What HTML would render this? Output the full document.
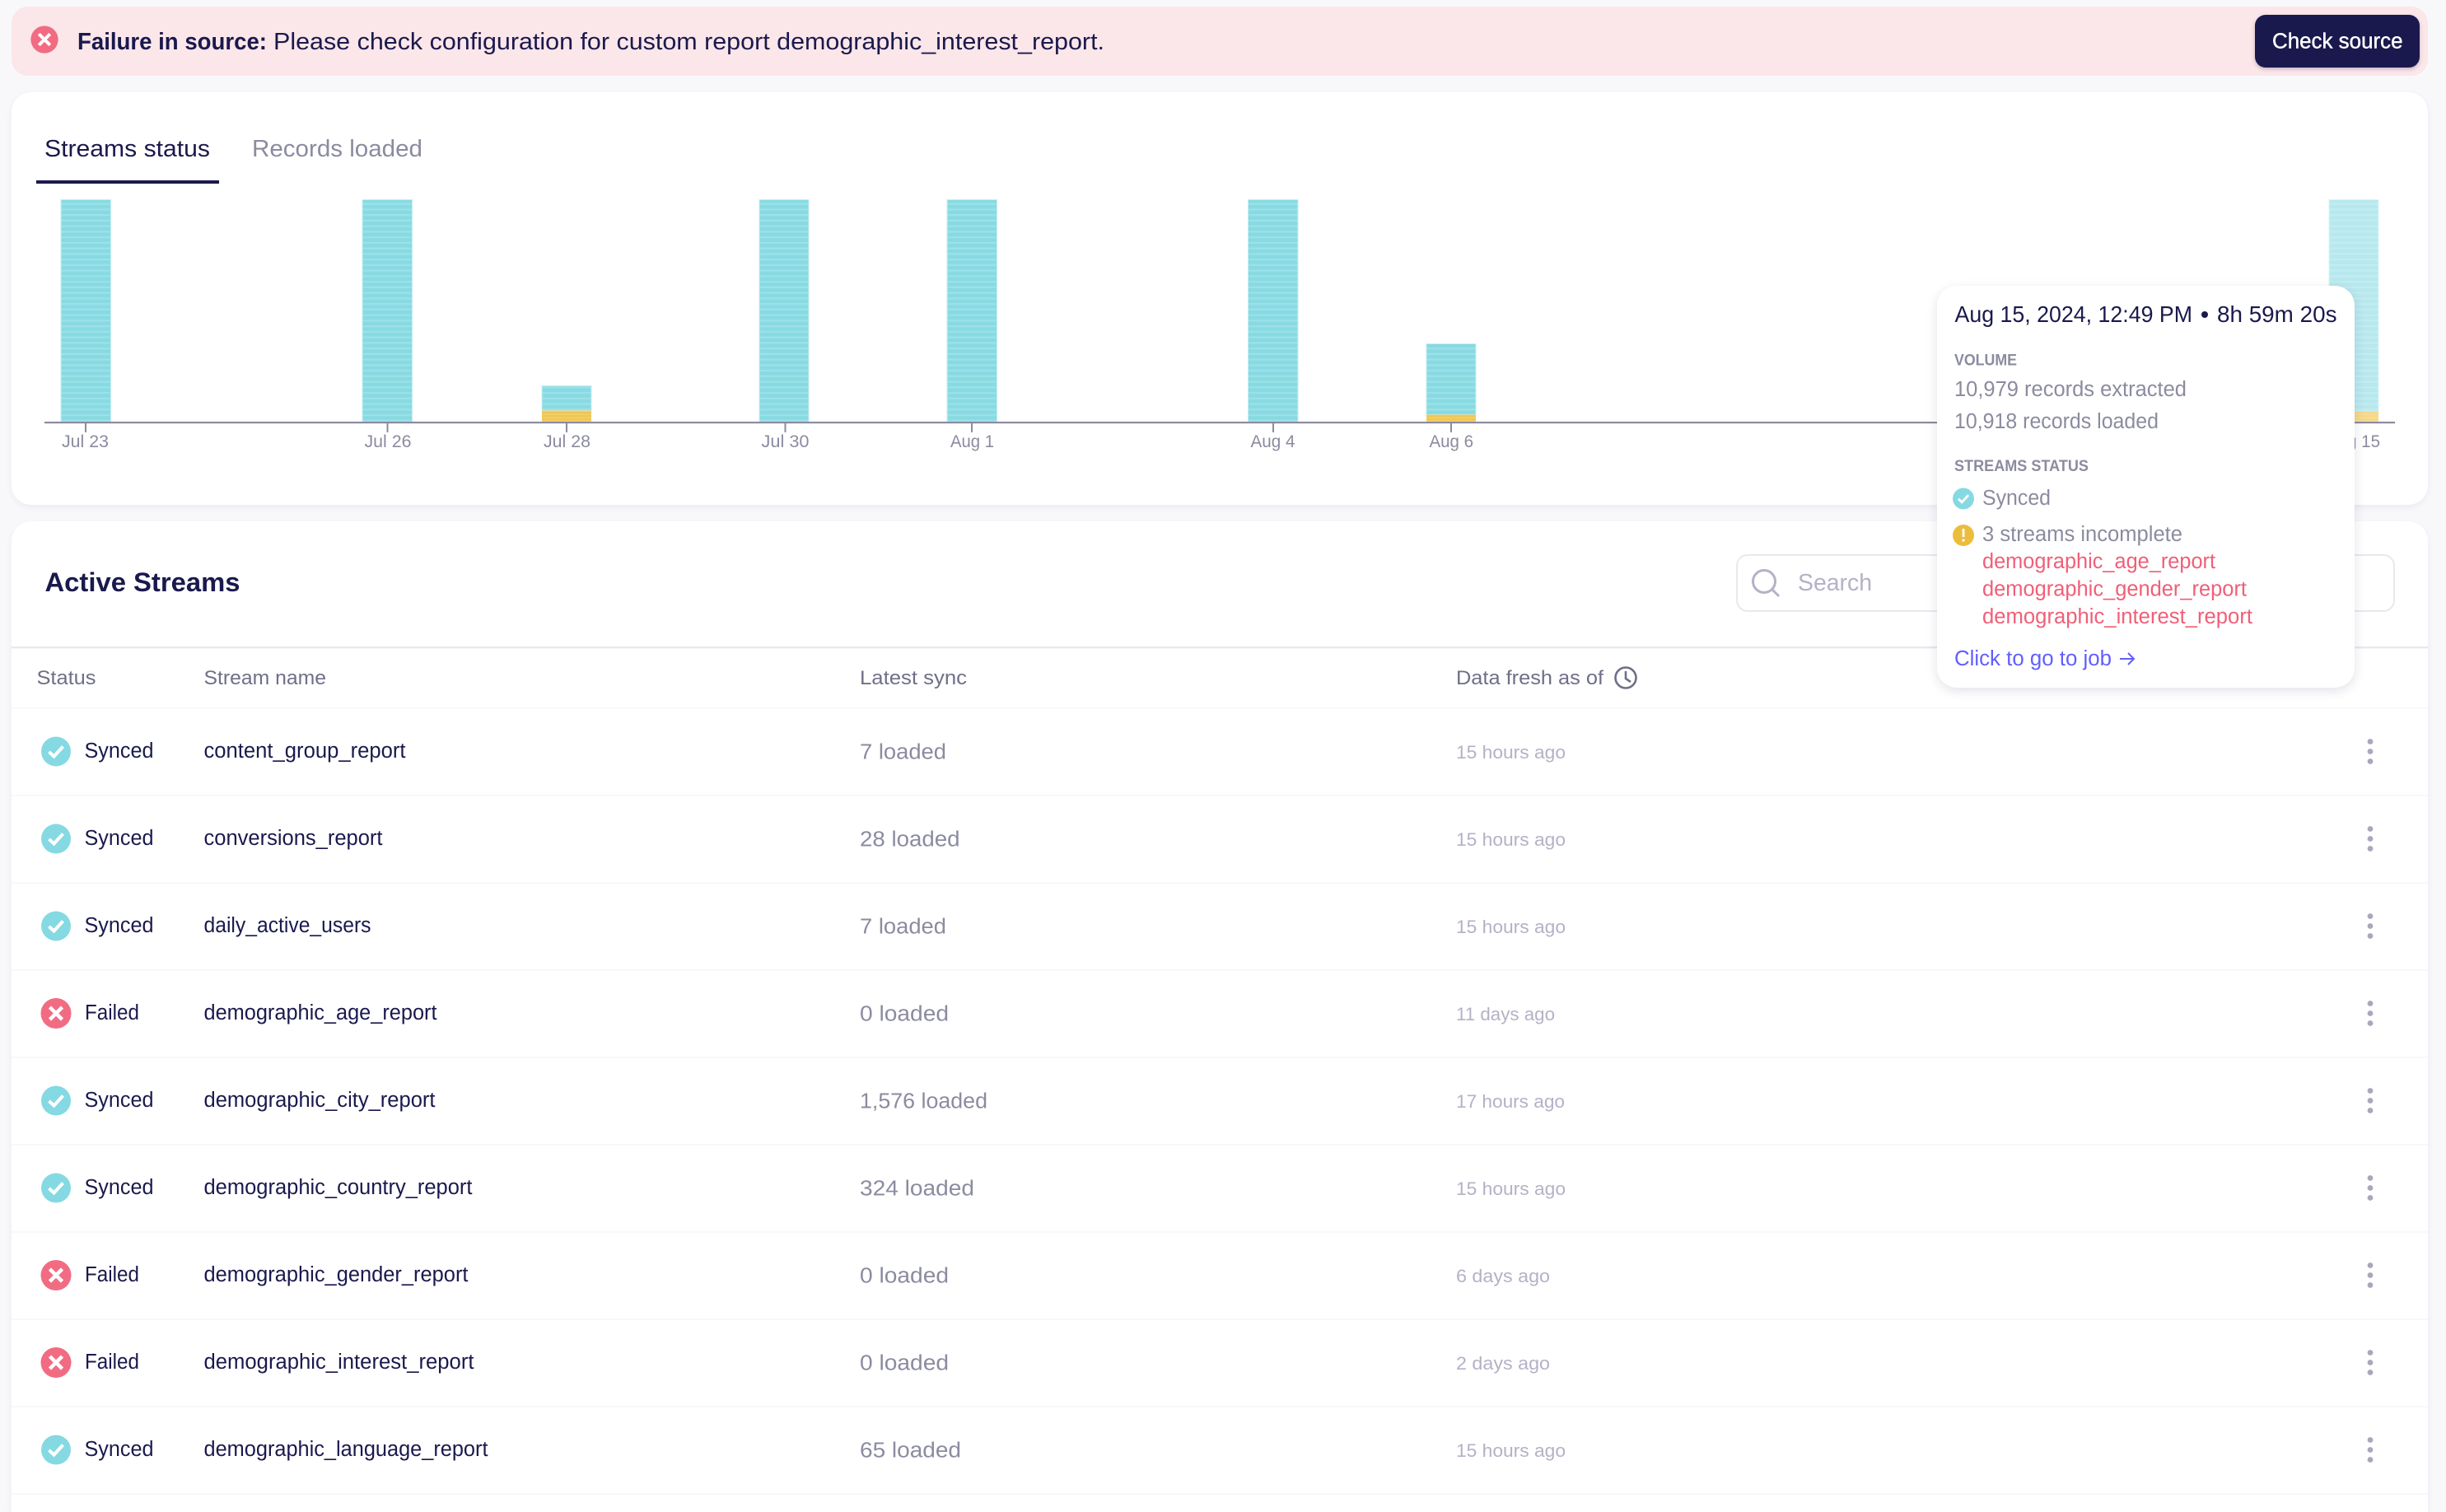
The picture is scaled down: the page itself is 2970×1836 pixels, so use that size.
<!DOCTYPE html>
<html><head><meta charset="utf-8"><title>Streams</title>
<style>
html,body{margin:0;padding:0;background:#f8f8fb;width:2970px;height:1836px;overflow:hidden}
.wrap{position:relative;width:2970px;height:1836px;overflow:hidden;background:#f8f8fb}
.c{position:absolute;left:14px;width:2934px;background:#fff;border-radius:24px;box-shadow:0 3px 8px rgba(26,25,77,.06)}
.ban{position:absolute;left:14px;top:8px;width:2934px;height:84px;background:#fbe6e9;border-radius:20px}
.btn{position:absolute;left:2738px;top:18px;width:200px;height:64px;background:#1a194d;border-radius:13px;box-shadow:0 2px 5px rgba(26,25,77,.25)}
.tip{position:absolute;left:2352px;top:347px;width:507px;height:488px;background:#fff;border-radius:24px;box-shadow:0 4px 14px rgba(26,25,77,.12)}
svg{position:absolute;left:0;top:0}
text{font-family:"Liberation Sans",Arial,sans-serif;fill:#1a194d;font-size:25.5px}
.g{fill:#8b8ba0}.h{fill:#6f6f89;font-size:24.5px}.t{fill:#b3b2c6;font-size:22px}.x{fill:#8b8ba0;font-size:21px}
.r{fill:#ef5f78}.s{font-size:19.5px;font-weight:bold;fill:#8b8ba0}
</style></head><body>
<div class="wrap">
<div class="ban"></div><div class="btn"></div>
<div class="c" style="top:112px;height:501px"></div>
<div class="c" style="top:633px;height:1203px;border-radius:24px 24px 0 0"></div>
<svg width="2970" height="1836" viewBox="0 0 2970 1836">
<defs>
<pattern id="st" width="61" height="6.75" patternUnits="userSpaceOnUse" y="242"><rect width="61" height="6.75" fill="#88dae2"/><rect y="4.5" width="61" height="2.25" fill="#9ce1e8"/></pattern>
<pattern id="ye" width="61" height="4" patternUnits="userSpaceOnUse"><rect width="61" height="4" fill="#efc654"/><rect y="2.6" width="61" height="1.4" fill="#f3d06f"/></pattern>
<g id="ok"><circle r="18" fill="#85d9e2"/><path d="M-8.5 0.5L-2.5 6L8.5-6" fill="none" stroke="#fff" stroke-width="4"/></g>
<g id="no"><circle r="18.5" fill="#f16c82"/><path d="M-7.5-7.5L7.5 7.5M7.5-7.5L-7.5 7.5" fill="none" stroke="#fff" stroke-width="4.5"/></g>
<g id="dots"><circle cy="-12" r="3.4" fill="#a9a8bb"/><circle r="3.4" fill="#a9a8bb"/><circle cy="12" r="3.4" fill="#a9a8bb"/></g>
</defs>

<!-- banner -->
<use href="#no" transform="translate(54,48) scale(.9)"/>
<text x="94" y="60" font-weight="bold" textLength="230" lengthAdjust="spacingAndGlyphs" style="font-size:28.5px">Failure in source:</text>
<text x="332" y="60" textLength="1009" lengthAdjust="spacingAndGlyphs" style="font-size:28.5px">Please check configuration for custom report demographic_interest_report.</text>
<text x="2759" y="58.5" textLength="158.5" lengthAdjust="spacingAndGlyphs" style="fill:#fff;stroke:#fff;stroke-width:.4">Check source</text>

<!-- tabs -->
<text x="54" y="190" textLength="201" lengthAdjust="spacingAndGlyphs" style="font-size:28.5px">Streams status</text>
<text x="306" y="190" textLength="207" lengthAdjust="spacingAndGlyphs" class="g" style="font-size:28.5px">Records loaded</text>
<rect x="44" y="219" width="222" height="4" fill="#1a194d"/>

<!-- bars -->
<g stroke="#c4eef2" stroke-width="1">
<rect x="74" y="242.5" width="60.5" height="270" fill="url(#st)"/>
<rect x="440" y="242.5" width="60.5" height="270" fill="url(#st)"/>
<rect x="658" y="468.5" width="60" height="30" fill="url(#st)"/>
<rect x="922" y="242.5" width="60" height="270" fill="url(#st)"/>
<rect x="1150" y="242.5" width="60.5" height="270" fill="url(#st)"/>
<rect x="1515.5" y="242.5" width="60.5" height="270" fill="url(#st)"/>
<rect x="1732" y="417.5" width="60" height="86" fill="url(#st)"/>
<g opacity=".6"><rect x="2828" y="242.5" width="60" height="257" fill="url(#st)"/></g>
</g>
<rect x="658" y="498.5" width="60" height="13.5" fill="url(#ye)"/>
<rect x="1732" y="503.5" width="60" height="8.5" fill="url(#ye)"/>
<rect x="2828" y="499.5" width="60" height="12.5" fill="url(#ye)" opacity=".7"/>
<rect x="54" y="512" width="2854" height="2.2" fill="#8b8ba0"/>
<g fill="#8b8ba0">
<rect x="103" y="514" width="2" height="11"/><rect x="469.5" y="514" width="2" height="11"/><rect x="687" y="514" width="2" height="11"/><rect x="952.5" y="514" width="2" height="11"/><rect x="1179" y="514" width="2" height="11"/><rect x="1545" y="514" width="2" height="11"/><rect x="1761" y="514" width="2" height="11"/>
</g>
<g>
<text class="x" x="75" y="543" textLength="57" lengthAdjust="spacingAndGlyphs">Jul 23</text>
<text class="x" x="442.5" y="543" textLength="57" lengthAdjust="spacingAndGlyphs">Jul 26</text>
<text class="x" x="660" y="543" textLength="57" lengthAdjust="spacingAndGlyphs">Jul 28</text>
<text class="x" x="924.5" y="543" textLength="58" lengthAdjust="spacingAndGlyphs">Jul 30</text>
<text class="x" x="1154" y="543" textLength="53" lengthAdjust="spacingAndGlyphs">Aug 1</text>
<text class="x" x="1518.5" y="543" textLength="54" lengthAdjust="spacingAndGlyphs">Aug 4</text>
<text class="x" x="1735.5" y="543" textLength="53.5" lengthAdjust="spacingAndGlyphs">Aug 6</text>
<text class="x" x="2825" y="543" textLength="65" lengthAdjust="spacingAndGlyphs">Aug 15</text>
</g>

<!-- Active streams head -->
<text x="54.5" y="718" textLength="237" lengthAdjust="spacingAndGlyphs" font-weight="bold" style="font-size:32px">Active Streams</text>
<rect x="2109" y="674" width="798" height="68" rx="13" fill="#fff" stroke="#e8e8ef" stroke-width="2"/>
<circle cx="2142" cy="706" r="13.5" fill="none" stroke="#b3b2c6" stroke-width="3"/>
<path d="M2152 716L2160 724" stroke="#b3b2c6" stroke-width="3" fill="none"/>
<text x="2183" y="717" textLength="90" lengthAdjust="spacingAndGlyphs" style="font-size:28.5px;fill:#b3b2c6">Search</text>
<rect x="14" y="785" width="2934" height="2.4" fill="#e8e8ef"/>

<!-- table head -->
<text class="h" x="44.5" y="831" textLength="72" lengthAdjust="spacingAndGlyphs">Status</text>
<text class="h" x="247.5" y="831" textLength="148.5" lengthAdjust="spacingAndGlyphs">Stream name</text>
<text class="h" x="1044" y="831" textLength="130" lengthAdjust="spacingAndGlyphs">Latest sync</text>
<text class="h" x="1768" y="831" textLength="179" lengthAdjust="spacingAndGlyphs">Data fresh as of</text>
<circle cx="1974" cy="823" r="12.5" fill="none" stroke="#6f6f89" stroke-width="2.6"/>
<path d="M1974 815V824L1980 828" fill="none" stroke="#6f6f89" stroke-width="2.6"/>

<!-- row separators -->
<g fill="#f8f8fb">
<rect x="14" y="859" width="2934" height="2"/><rect x="14" y="965" width="2934" height="2"/><rect x="14" y="1071" width="2934" height="2"/><rect x="14" y="1177" width="2934" height="2"/><rect x="14" y="1283" width="2934" height="2"/><rect x="14" y="1389" width="2934" height="2"/><rect x="14" y="1495" width="2934" height="2"/><rect x="14" y="1601" width="2934" height="2"/><rect x="14" y="1707" width="2934" height="2"/><rect x="14" y="1813" width="2934" height="2"/>
</g>

<!-- rows -->
<use href="#ok" x="68" y="912.5"/><use href="#ok" x="68" y="1018.5"/><use href="#ok" x="68" y="1124.5"/><use href="#no" x="68" y="1230.5"/><use href="#ok" x="68" y="1336.5"/><use href="#ok" x="68" y="1442.5"/><use href="#no" x="68" y="1548.5"/><use href="#no" x="68" y="1654.5"/><use href="#ok" x="68" y="1760.5"/>
<use href="#dots" x="2878" y="912.5"/><use href="#dots" x="2878" y="1018.5"/><use href="#dots" x="2878" y="1124.5"/><use href="#dots" x="2878" y="1230.5"/><use href="#dots" x="2878" y="1336.5"/><use href="#dots" x="2878" y="1442.5"/><use href="#dots" x="2878" y="1548.5"/><use href="#dots" x="2878" y="1654.5"/><use href="#dots" x="2878" y="1760.5"/>

<text x="102.5" y="920" textLength="84" lengthAdjust="spacingAndGlyphs">Synced</text>
<text x="247.5" y="920" textLength="245" lengthAdjust="spacingAndGlyphs">content_group_report</text>
<text class="g" x="1044" y="921.5" textLength="105" lengthAdjust="spacingAndGlyphs">7 loaded</text>
<text class="t" x="1768" y="921" textLength="133" lengthAdjust="spacingAndGlyphs">15 hours ago</text>

<text x="102.5" y="1026" textLength="84" lengthAdjust="spacingAndGlyphs">Synced</text>
<text x="247.5" y="1026" textLength="217" lengthAdjust="spacingAndGlyphs">conversions_report</text>
<text class="g" x="1044" y="1027.5" textLength="121.5" lengthAdjust="spacingAndGlyphs">28 loaded</text>
<text class="t" x="1768" y="1027" textLength="133" lengthAdjust="spacingAndGlyphs">15 hours ago</text>

<text x="102.5" y="1132" textLength="84" lengthAdjust="spacingAndGlyphs">Synced</text>
<text x="247.5" y="1132" textLength="203" lengthAdjust="spacingAndGlyphs">daily_active_users</text>
<text class="g" x="1044" y="1133.5" textLength="105" lengthAdjust="spacingAndGlyphs">7 loaded</text>
<text class="t" x="1768" y="1133" textLength="133" lengthAdjust="spacingAndGlyphs">15 hours ago</text>

<text x="103" y="1238" textLength="66" lengthAdjust="spacingAndGlyphs">Failed</text>
<text x="247.5" y="1238" textLength="283" lengthAdjust="spacingAndGlyphs">demographic_age_report</text>
<text class="g" x="1044" y="1239.5" textLength="108" lengthAdjust="spacingAndGlyphs">0 loaded</text>
<text class="t" x="1768" y="1239" textLength="120" lengthAdjust="spacingAndGlyphs">11 days ago</text>

<text x="102.5" y="1344" textLength="84" lengthAdjust="spacingAndGlyphs">Synced</text>
<text x="247.5" y="1344" textLength="281" lengthAdjust="spacingAndGlyphs">demographic_city_report</text>
<text class="g" x="1044" y="1345.5" textLength="155" lengthAdjust="spacingAndGlyphs">1,576 loaded</text>
<text class="t" x="1768" y="1345" textLength="132" lengthAdjust="spacingAndGlyphs">17 hours ago</text>

<text x="102.5" y="1450" textLength="84" lengthAdjust="spacingAndGlyphs">Synced</text>
<text x="247.5" y="1450" textLength="326" lengthAdjust="spacingAndGlyphs">demographic_country_report</text>
<text class="g" x="1044" y="1451.5" textLength="139" lengthAdjust="spacingAndGlyphs">324 loaded</text>
<text class="t" x="1768" y="1451" textLength="133" lengthAdjust="spacingAndGlyphs">15 hours ago</text>

<text x="103" y="1556" textLength="66" lengthAdjust="spacingAndGlyphs">Failed</text>
<text x="247.5" y="1556" textLength="321" lengthAdjust="spacingAndGlyphs">demographic_gender_report</text>
<text class="g" x="1044" y="1557.5" textLength="108" lengthAdjust="spacingAndGlyphs">0 loaded</text>
<text class="t" x="1768" y="1557" textLength="114" lengthAdjust="spacingAndGlyphs">6 days ago</text>

<text x="103" y="1662" textLength="66" lengthAdjust="spacingAndGlyphs">Failed</text>
<text x="247.5" y="1662" textLength="328" lengthAdjust="spacingAndGlyphs">demographic_interest_report</text>
<text class="g" x="1044" y="1663.5" textLength="108" lengthAdjust="spacingAndGlyphs">0 loaded</text>
<text class="t" x="1768" y="1663" textLength="114" lengthAdjust="spacingAndGlyphs">2 days ago</text>

<text x="102.5" y="1768" textLength="84" lengthAdjust="spacingAndGlyphs">Synced</text>
<text x="247.5" y="1768" textLength="345" lengthAdjust="spacingAndGlyphs">demographic_language_report</text>
<text class="g" x="1044" y="1769.5" textLength="123" lengthAdjust="spacingAndGlyphs">65 loaded</text>
<text class="t" x="1768" y="1769" textLength="133" lengthAdjust="spacingAndGlyphs">15 hours ago</text>
</svg>

<div class="tip"></div>
<svg width="2970" height="1836" viewBox="0 0 2970 1836">
<text x="2373.5" y="391" textLength="288.5" lengthAdjust="spacingAndGlyphs" style="font-size:27.5px">Aug 15, 2024, 12:49 PM</text>
<circle cx="2677" cy="382" r="4" fill="#1a194d"/>
<text x="2692" y="391" textLength="145.5" lengthAdjust="spacingAndGlyphs" style="font-size:27.5px">8h 59m 20s</text>
<text class="s" x="2373" y="443.5" textLength="76" lengthAdjust="spacingAndGlyphs">VOLUME</text>
<text class="g" x="2373" y="481" textLength="282" lengthAdjust="spacingAndGlyphs">10,979 records extracted</text>
<text class="g" x="2373" y="520" textLength="248" lengthAdjust="spacingAndGlyphs">10,918 records loaded</text>
<text class="s" x="2373" y="572" textLength="163" lengthAdjust="spacingAndGlyphs">STREAMS STATUS</text>
<use href="#ok" transform="translate(2384,605.5) scale(.72)"/>
<text class="g" x="2407" y="613" textLength="83" lengthAdjust="spacingAndGlyphs">Synced</text>
<circle cx="2384" cy="650" r="13" fill="#ecbd3d"/>
<rect x="2382.6" y="642" width="2.8" height="10" fill="#fff"/><rect x="2382.6" y="654.5" width="2.8" height="3" fill="#fff"/>
<text class="g" x="2407" y="657" textLength="243" lengthAdjust="spacingAndGlyphs">3 streams incomplete</text>
<text class="r" x="2407" y="690" textLength="283" lengthAdjust="spacingAndGlyphs">demographic_age_report</text>
<text class="r" x="2407" y="723.5" textLength="321" lengthAdjust="spacingAndGlyphs">demographic_gender_report</text>
<text class="r" x="2407" y="757" textLength="328" lengthAdjust="spacingAndGlyphs">demographic_interest_report</text>
<text x="2373" y="808" textLength="191" lengthAdjust="spacingAndGlyphs" style="fill:#615eff">Click to go to job</text>
<path d="M2574 800H2591M2584 793L2591 800L2584 807" fill="none" stroke="#615eff" stroke-width="2"/>
</svg>
</div>
</body></html>
